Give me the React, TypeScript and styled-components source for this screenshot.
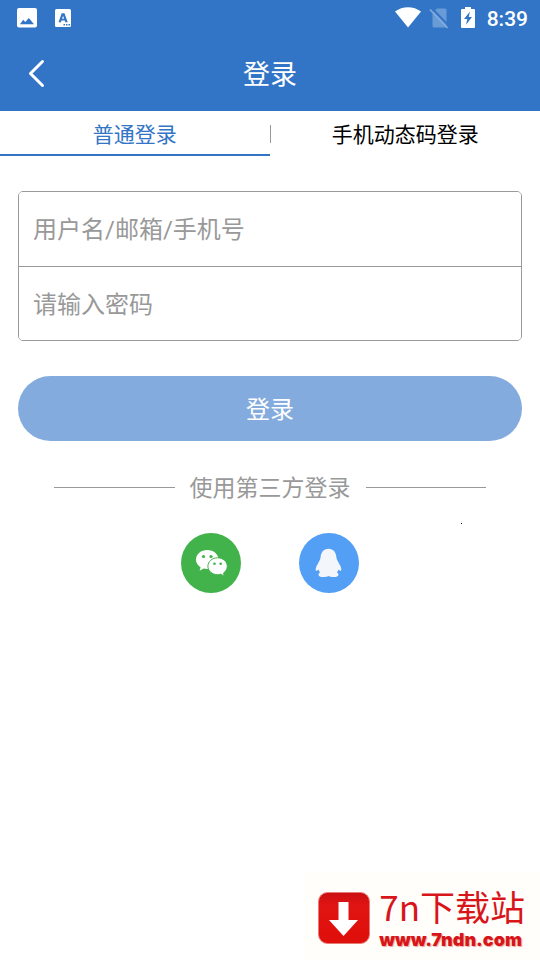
import React, { useState } from "react";
import styled, { createGlobalStyle } from "styled-components";

const blue = "#3275c6";
const gray = "#999999";

const GlobalStyle = createGlobalStyle`
  *, *::before, *::after { box-sizing: border-box; }
  body {
    margin: 0;
    background: #ffffff;
    font-family: Roboto, "Noto Sans CJK SC", sans-serif;
  }
  button, input { font: inherit; }
`;

const Page = styled.div`
  display: flex;
  flex-direction: column;
  min-height: 100vh;
`;

const Header = styled.header`
  background: ${blue};
  color: #ffffff;
`;

const StatusBar = styled.div`
  display: flex;
  align-items: center;
  justify-content: space-between;
  height: 36px;
  padding: 0 12px 0 16px;
`;

const StatusGroup = styled.div<{ $gap: number }>`
  display: flex;
  align-items: center;
  gap: ${(p) => p.$gap}px;

  svg { display: block; }
`;

const Clock = styled.span`
  padding-top: 2px;
  font-size: 21px;
  font-weight: 500;
  line-height: 24px;
`;

const NavBar = styled.div`
  display: grid;
  grid-template-columns: 72px 1fr 72px;
  align-items: center;
  height: 75px;
`;

const BackButton = styled.button`
  display: flex;
  align-items: center;
  height: 100%;
  padding: 0 0 0 26px;
  border: 0;
  background: none;
  color: inherit;
`;

const Title = styled.h1`
  margin: 0;
  padding-top: 2px;
  font-size: 27px;
  font-weight: 400;
  line-height: 40px;
  text-align: center;
`;

const Tabs = styled.div`
  display: grid;
  grid-template-columns: 1fr 1px 1fr;
  height: 45px;
`;

const Tab = styled.button<{ $active: boolean }>`
  padding: 4px 0 0;
  border: 0;
  border-bottom: 2px solid ${(p) => (p.$active ? blue : "transparent")};
  background: none;
  color: ${(p) => (p.$active ? blue : "#000000")};
  font-size: 21px;
  line-height: 32px;
`;

const TabDivider = styled.span`
  height: 18px;
  margin-top: 14px;
  background: ${gray};
`;

const Form = styled.form`
  display: flex;
  flex-direction: column;
  gap: 35px;
  padding: 35px 18px 0;
`;

const Fields = styled.div`
  border: 1px solid ${gray};
  border-radius: 5px;
  overflow: hidden;
`;

const Field = styled.input`
  display: block;
  width: 100%;
  height: 74px;
  padding: 2px 14px 0;
  border: 0;
  outline: 0;
  background: #ffffff;
  color: #333333;
  font-size: 24px;

  & + & { border-top: 1px solid ${gray}; }
  &::placeholder { color: ${gray}; opacity: 1; }
`;

const SubmitButton = styled.button`
  height: 65px;
  padding: 0 0 2px;
  border: 0;
  border-radius: 33px;
  background: #84abdd;
  color: #ffffff;
  font-size: 24px;
`;

const ThirdParty = styled.section`
  position: relative;
  display: flex;
  flex-direction: column;
  align-items: center;
  gap: 29px;
  padding: 29px 54px 0;
`;

const Divider = styled.div`
  display: flex;
  align-items: center;
  gap: 15px;
  width: 100%;
  color: ${gray};

  &::before, &::after {
    content: "";
    flex: 1;
    height: 1px;
    background: ${gray};
  }
`;

const DividerLabel = styled.span`
  padding-top: 4px;
  font-size: 23px;
  line-height: 30px;
`;

const Dot = styled.span`
  position: absolute;
  top: 82px;
  right: 78px;
  width: 1px;
  height: 1px;
  background: #000000;
`;

const Providers = styled.div`
  display: flex;
  gap: 58px;
`;

const Provider = styled.button<{ $color: string }>`
  width: 60px;
  height: 60px;
  padding: 0;
  border: 0;
  border-radius: 50%;
  background: ${(p) => p.$color};

  svg { display: block; }
`;

const Watermark = styled.footer`
  display: flex;
  align-items: center;
  align-self: flex-end;
  gap: 9px;
  margin-top: auto;
  padding: 12px 15px 8px;
  background: #fffefb;
  color: #d8161a;
`;

const WatermarkText = styled.div`
  display: flex;
  flex-direction: column;
`;

const SiteName = styled.span`
  font-family: "Noto Sans CJK SC", sans-serif;
  font-size: 35px;
  line-height: 44px;
`;

const SiteLink = styled.a`
  color: inherit;
  font-family: Inter, sans-serif;
  font-size: 18px;
  font-weight: 900;
  line-height: 24px;
  text-decoration: none;
  text-shadow: 1px 1px 1px #e9a9a5;
`;

const PictureIcon = () => (
  <svg width="22" height="22" viewBox="0 0 22 22" aria-hidden="true">
    <rect x="1" y="1" width="20" height="19.500" rx="2" fill="#fff" />
    <path d="M4 17.200 7.200 12.800 9.300 15 12.800 11 18 17.200Z" fill={blue} />
  </svg>
);

const LetterIcon = () => (
  <svg width="16" height="18" viewBox="0 0 16 18" aria-hidden="true">
    <rect width="16" height="18" rx="1.500" fill="#fff" />
    <path
      d="M6.700 4.200H9.500L12.700 13.200H10.300L9.700 11.400H6.500L5.900 13.200H3.500ZM8.100 6.800 7.100 9.700H9.100Z"
      fill={blue}
      fillRule="evenodd"
    />
    <path d="M8.500 15H10v1.500H8.500zM11 15h1.500v1.500H11zM13.500 15H15v1.500h-1.500z" fill={blue} />
  </svg>
);

const WifiIcon = () => (
  <svg width="26" height="22" viewBox="0 0 26 22" aria-hidden="true">
    <path d="M0 4.500C7.500-1.200 18.500-1.200 26 4.500L13 20.500Z" fill="#fff" />
  </svg>
);

const NoSimIcon = () => (
  <svg width="20" height="22" viewBox="0 0 20 22" aria-hidden="true">
    <path d="M8 1.500H16Q17.500 1.500 17.500 3V19Q17.500 20.500 16 20.500H5Q3.500 20.500 3.500 19V6Z" fill="#699bd6" />
    <path d="M3 1.500 20 19" stroke={blue} strokeWidth="2" />
    <path d="M1 2.500 18.500 21" stroke="#84abdd" strokeWidth="1.800" />
  </svg>
);

const BatteryIcon = () => (
  <svg width="14" height="22" viewBox="0 0 14 22" aria-hidden="true">
    <path d="M4 0H10V2H13Q14 2 14 3V20Q14 21 13 21H1Q0 21 0 20V3Q0 2 1 2H4Z" fill="#fff" />
    <path d="M9 4.500 3 12H6.300L5 17.800 11 10H7.700Z" fill={blue} />
  </svg>
);

const BackIcon = () => (
  <svg width="20" height="30" viewBox="0 0 20 30" aria-hidden="true">
    <path
      d="M16.500 2.500 4.500 14.500 16.500 26.500"
      fill="none"
      stroke="#fff"
      strokeWidth="3"
      strokeLinecap="round"
      strokeLinejoin="round"
    />
  </svg>
);

const WechatIcon = () => (
  <svg width="60" height="60" viewBox="0 0 60 60" aria-hidden="true">
    <path
      d="M26.300 17C20 17 15 21.200 15 26.700c0 3.200 1.800 5.800 4.600 7.600L18.600 37.800l4-2.200c1.200.3 2.400.5 3.700.5C32.500 36.100 37.500 31.900 37.500 26.600 37.500 21.200 32.500 17 26.300 17Z"
      fill="#fff"
    />
    <path
      d="M36.600 24.800c-5.500 0-9.700 3.800-9.700 8.400s4.200 8.500 9.700 8.500c1.100 0 2.200-.2 3.200-.5l3.500 2-.8-3.200c2.400-1.600 3.800-4 3.800-6.700 0-4.700-4.300-8.500-9.700-8.500Z"
      fill="#fff"
      stroke="#42b24b"
      strokeWidth="1"
    />
    <circle cx="22.500" cy="23.500" r="1.600" fill="#42b24b" />
    <circle cx="30" cy="23.500" r="1.600" fill="#42b24b" />
    <circle cx="33.500" cy="30.800" r="1.300" fill="#42b24b" />
    <circle cx="39.700" cy="30.800" r="1.300" fill="#42b24b" />
  </svg>
);

const QqIcon = () => (
  <svg width="60" height="60" viewBox="0 0 60 60" aria-hidden="true">
    <path
      d="M29.500 15.700C24.500 15.700 21.800 19.500 21.500 25 21 27 20 28.500 19 30.500 17.500 32.800 16.600 35 16.700 36.800c.1 1.700 1.500 1 2.700-.4.300 1.200.9 2.100 1.700 3-2.700 1.300-2 4.400 2.500 4.600 2.400.1 4.700-.3 5.900-1.100 1.200.8 3.500 1.200 5.900 1.100 4.500-.2 5.200-3.300 2.500-4.600.8-.9 1.400-1.800 1.700-3 1.200 1.400 2.600 2.100 2.700.4.100-1.800-.8-4-2.300-6.300-1-2-2-3.500-2.500-5.500C37.200 19.500 34.500 15.700 29.500 15.700Z"
      fill="#f3f6fa"
    />
  </svg>
);

const DownloadIcon = () => (
  <svg width="52" height="52" viewBox="0 0 52 52" aria-hidden="true">
    <defs>
      <linearGradient id="badge" x1="0" y1="0" x2="0" y2="1">
        <stop offset="0" stopColor="#c90f12" />
        <stop offset="0.250" stopColor="#e01412" />
        <stop offset="1" stopColor="#df0f0a" />
      </linearGradient>
    </defs>
    <rect x=".5" y=".5" width="51" height="51" rx="9" fill="url(#badge)" stroke="#e77c76" />
    <path d="M20.500 10H30.500V28H40L25.500 44 11 28H20.500Z" fill="#fff" />
  </svg>
);

const tabs = ["普通登录", "手机动态码登录"];

export default function App() {
  const [active, setActive] = useState(0);

  return (
    <Page>
      <GlobalStyle />
      <Header>
        <StatusBar>
          <StatusGroup $gap={17}>
            <PictureIcon />
            <LetterIcon />
          </StatusGroup>
          <StatusGroup $gap={12}>
            <StatusGroup $gap={8}>
              <WifiIcon />
              <NoSimIcon />
            </StatusGroup>
            <BatteryIcon />
            <Clock>8:39</Clock>
          </StatusGroup>
        </StatusBar>
        <NavBar>
          <BackButton type="button" aria-label="返回">
            <BackIcon />
          </BackButton>
          <Title>登录</Title>
        </NavBar>
      </Header>

      <Tabs role="tablist">
        <Tab type="button" role="tab" aria-selected={active === 0} $active={active === 0} onClick={() => setActive(0)}>
          {tabs[0]}
        </Tab>
        <TabDivider />
        <Tab type="button" role="tab" aria-selected={active === 1} $active={active === 1} onClick={() => setActive(1)}>
          {tabs[1]}
        </Tab>
      </Tabs>

      <Form onSubmit={(e) => e.preventDefault()}>
        <Fields>
          <Field type="text" aria-label="用户名/邮箱/手机号" placeholder="用户名/邮箱/手机号" />
          <Field type="password" aria-label="请输入密码" placeholder="请输入密码" />
        </Fields>
        <SubmitButton type="submit">登录</SubmitButton>
      </Form>

      <ThirdParty>
        <Divider>
          <DividerLabel>使用第三方登录</DividerLabel>
        </Divider>
        <Dot />
        <Providers>
          <Provider type="button" aria-label="微信登录" $color="#42b24b">
            <WechatIcon />
          </Provider>
          <Provider type="button" aria-label="QQ登录" $color="#529ff5">
            <QqIcon />
          </Provider>
        </Providers>
      </ThirdParty>

      <Watermark>
        <DownloadIcon />
        <WatermarkText>
          <SiteName>7n下载站</SiteName>
          <SiteLink href="#">www.7ndn.com</SiteLink>
        </WatermarkText>
      </Watermark>
    </Page>
  );
}
